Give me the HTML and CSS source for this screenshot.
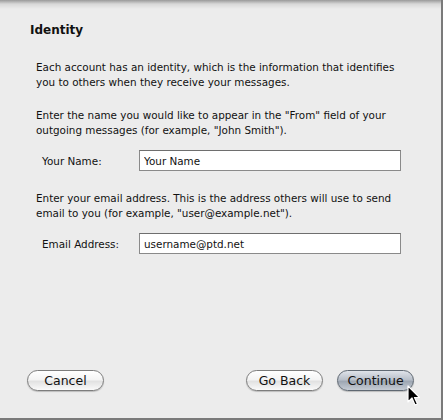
FILE: index.html
```html
<!DOCTYPE html>
<html lang="en">

<head>
    <meta charset="UTF-8">
    <meta name="viewport" content="width=device-width, initial-scale=1.0">
    <title>Identity</title>
    <link rel="stylesheet" href="styles.css">
</head>

<body>
    <div class="sheet">
        <h1 class="title">Identity</h1>
        <div class="content">
            <p>Each account has an identity, which is the information that identifies you to others when they receive your messages.</p>
            <p>Enter the name you would like to appear in the "From" field of your outgoing messages (for example, "John Smith").</p>
            <div class="field">
                <label for="name">Your Name:</label>
                <input id="name" type="text" value="Your Name">
            </div>
            <p>Enter your email address. This is the address others will use to send email to you (for example, "user@example.net").</p>
            <div class="field">
                <label for="email">Email Address:</label>
                <input id="email" type="text" value="username@ptd.net">
            </div>
        </div>
        <div class="buttons">
            <button class="btn">Cancel</button>
            <div class="right">
                <button class="btn">Go Back</button>
                <button class="btn default">Continue</button>
            </div>
        </div>
        <svg class="cursor" width="14" height="22" viewBox="0 0 14 22">
            <path d="M1 1 L1 17 L5 13 L8 20 L10.5 19 L7.5 12.5 L12.5 12.5 Z" fill="#000" stroke="#fff" stroke-width="1.2" stroke-linejoin="round"/>
        </svg>
    </div>
</body>

</html>
```

FILE: styles.css
```css
body {
    margin: 0;
    background: #ececec;
    font-family: "DejaVu Sans", "Liberation Sans", sans-serif;
    font-size: 10.4px;
    color: #111;
}

.sheet {
    position: relative;
    width: 441px;
    height: 418px;
    border-right: 2px solid #7a7a7a;
    border-bottom: 2px solid #7a7a7a;
    background: linear-gradient(#9a9a9a, #d8d8d8 4px, #ececec 9px);
    display: flex;
    flex-direction: column;
}

.title {
    margin: 23px 0 0 30px;
    font-size: 12px;
    font-weight: bold;
    line-height: 14px;
}

.content {
    margin: 23px 0 0 36px;
    width: 380px;
}

.content p {
    margin: 0 0 18px;
    line-height: 15px;
}

.field {
    display: flex;
    align-items: center;
    margin: -6px 0 20px 6px;
}

.field label {
    width: 97px;
}

.field input {
    width: 262px;
    height: 21px;
    box-sizing: border-box;
    margin: 0;
    padding: 1px 4px 0;
    border: 1px solid #8a8a8a;
    border-top-color: #6e6e6e;
    background: #fff;
    font: inherit;
    color: #111;
}

.buttons {
    margin-top: auto;
    margin-bottom: 27px;
    padding: 0 27px 0 27px;
    display: flex;
    justify-content: space-between;
}

.right {
    display: flex;
    gap: 14px;
}

.btn {
    width: 77px;
    height: 21px;
    border: 1px solid #7d7d7d;
    border-radius: 11px;
    background: linear-gradient(#ffffff, #f4f4f4 45%, #e2e2e2 55%, #fafafa);
    box-shadow: 0 1px 1px rgba(0, 0, 0, 0.2);
    font: inherit;
    font-size: 12.5px;
    color: #111;
    padding: 0;
}

.default {
    border-color: #5f6872;
    background: linear-gradient(#dfe3e9, #b9c0ca 45%, #9ea7b3 55%, #c6ccd4);
}

.cursor {
    position: absolute;
    left: 407px;
    top: 385px;
}
```
